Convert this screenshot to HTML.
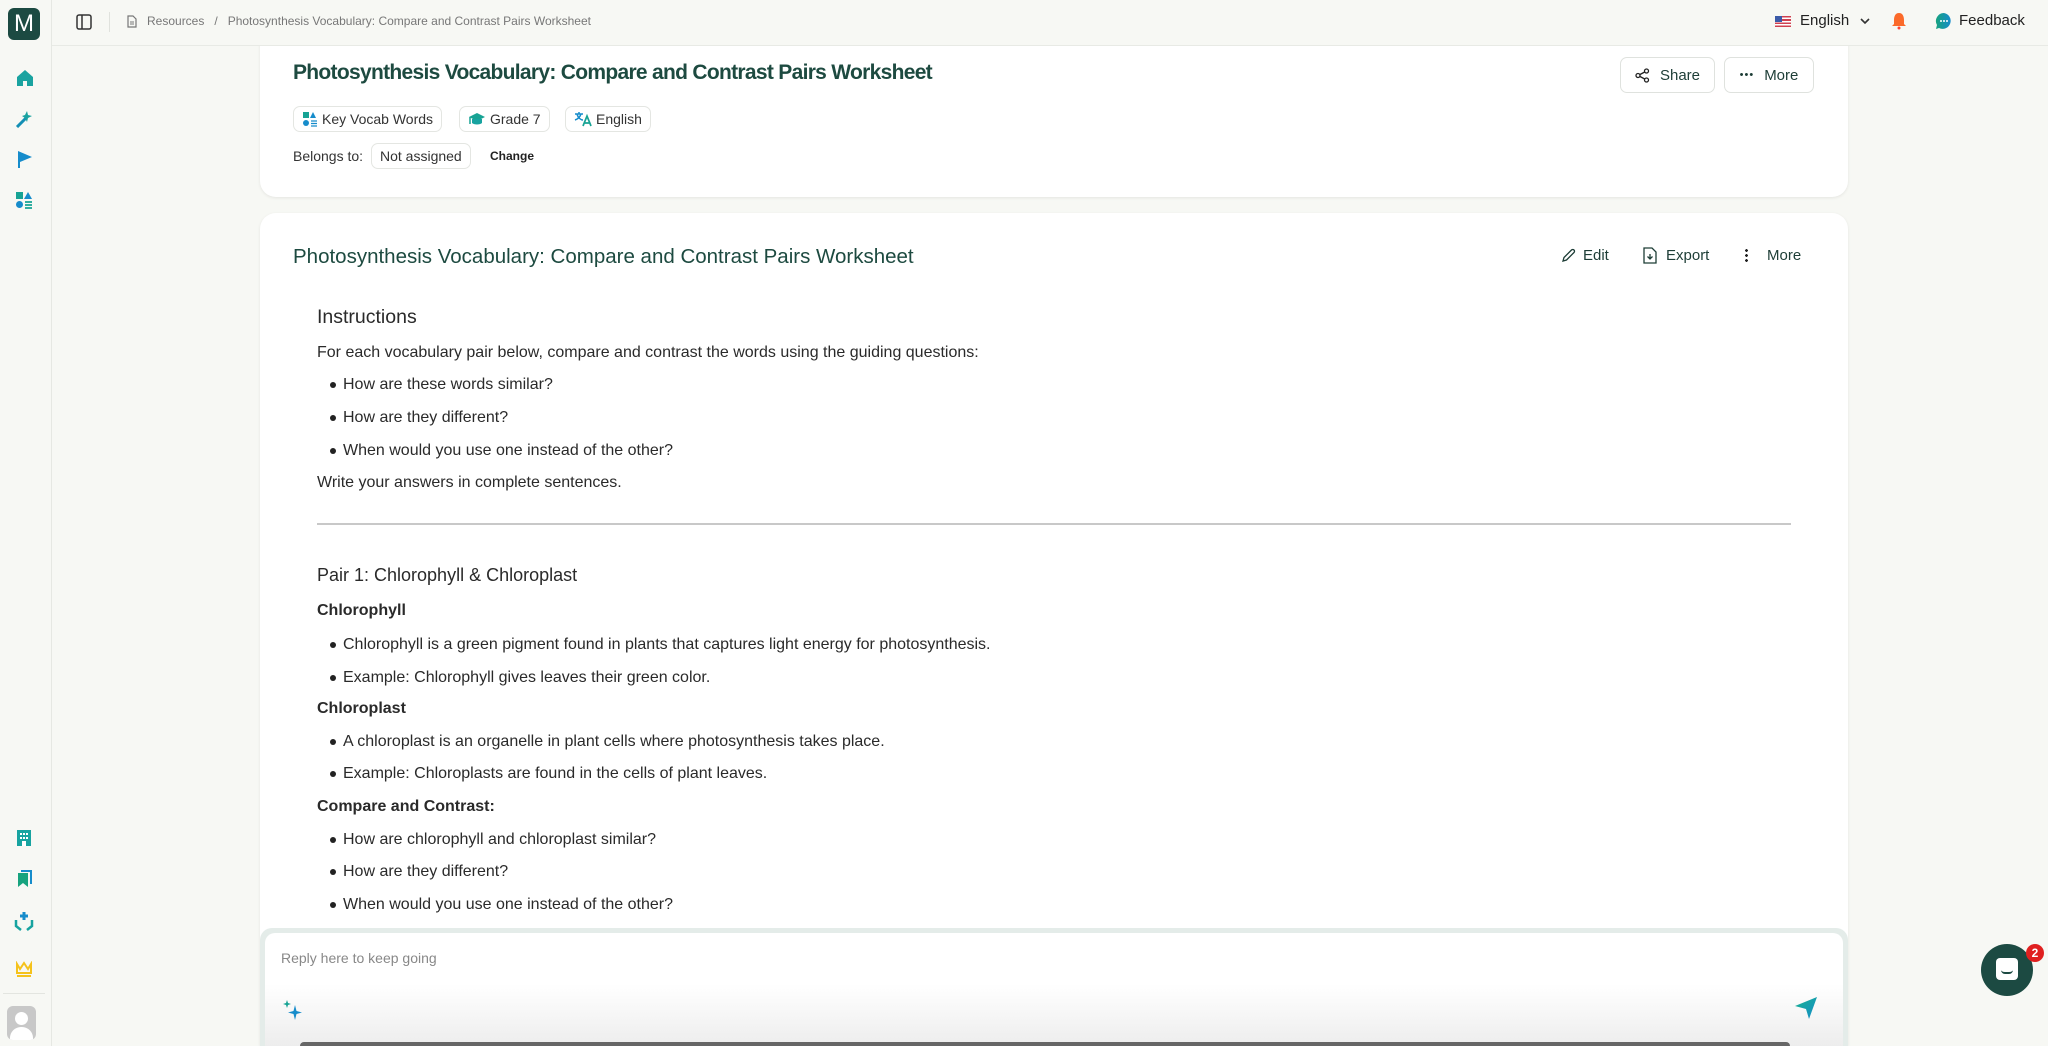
<!DOCTYPE html>
<html style="overflow:hidden;height:1046px"><head><meta charset="utf-8"><style>
*{box-sizing:border-box;margin:0;padding:0}
body{width:2048px;height:1046px;overflow:hidden;background:#f7f8f4;font-family:"Liberation Sans",sans-serif;color:#222;position:relative}
.abs{position:absolute}
.side{left:0;top:0;width:52px;height:1046px;border-right:1px solid #e6e8e3;background:#f7f8f4}
.top{left:52px;top:0;right:0;height:46px;border-bottom:1px solid #e8eae5;background:#f7f8f4;z-index:2}
.card{background:#fff;border-radius:16px;box-shadow:0 1px 3px rgba(0,0,0,.08)}
.chip{position:absolute;height:26px;border:1px solid #e4e6e2;border-radius:7px;font-size:14px;line-height:24px;padding:0 8px;color:#333;display:flex;align-items:center;gap:4px}
.btn{position:absolute;height:36px;border:1px solid #dfe2de;border-radius:7px;font-size:15px;color:#1d3d36;display:flex;align-items:center;justify-content:center;gap:10px;background:#fff}
.t{position:absolute;font-size:16px;color:#2a2a2a;white-space:nowrap}
.b{font-weight:bold}
.li::before{content:"";position:absolute;left:-13px;top:6px;width:6px;height:6px;border-radius:50%;background:#222}
</style></head><body>
<div class="abs side">
 <div class="abs" style="left:8px;top:8px;width:32px;height:32px;background:#1c4a42;border-radius:6px;color:#fff;font-size:24px;text-align:center;line-height:32px">M</div>
 <svg class="abs" style="left:16px;top:69px" width="18" height="18" viewBox="0 0 18 18"><path d="M9 1L17 8V17H11V12H7V17H1V8Z" fill="#1aa3a0"/></svg>
 <svg class="abs" style="left:15px;top:110px" width="18" height="18" viewBox="0 0 18 18"><path d="M2 17L11 8" stroke="#138fb4" stroke-width="3"/><path d="M12 1L13 5L17 6L13 8L12 12L10 8L7 6L10 5Z" fill="#1aa3a0"/></svg>
 <svg class="abs" style="left:16px;top:150px" width="18" height="18" viewBox="0 0 18 18"><path d="M2 1L16 7L4 12V18H2Z" fill="#168ccb"/></svg>
 <svg class="abs" style="left:15px;top:191px" width="18" height="18" viewBox="0 0 18 18"><rect x="1" y="1" width="7" height="7" fill="#17a394"/><path d="M13 1L17 8H9Z" fill="#168ccb"/><circle cx="4.5" cy="13.5" r="3.5" fill="#168ccb"/><path d="M10 11H17M10 14H17M10 17H17" stroke="#17a394" stroke-width="1.8"/></svg>
 <svg class="abs" style="left:15px;top:829px" width="18" height="18" viewBox="0 0 18 18"><rect x="2" y="1" width="14" height="16" fill="#17a3a0"/><g fill="#fff"><rect x="5" y="4" width="2" height="2"/><rect x="8" y="4" width="2" height="2"/><rect x="11" y="4" width="2" height="2"/><rect x="5" y="8" width="2" height="2"/><rect x="8" y="8" width="2" height="2"/><rect x="11" y="8" width="2" height="2"/><rect x="7" y="12" width="4" height="5"/></g></svg>
 <svg class="abs" style="left:15px;top:870px" width="18" height="18" viewBox="0 0 18 18"><path d="M3 3H13V17L8 13L3 17Z" fill="#17a37e"/><path d="M6 1H16V14" stroke="#168ccb" stroke-width="2" fill="none"/></svg>
 <svg class="abs" style="left:14px;top:911px" width="20" height="20" viewBox="0 0 20 20"><path d="M10 1V9M6 5H14" stroke="#168ccb" stroke-width="3"/><path d="M2 9V15L7 19M18 9V15L13 19" stroke="#17a3a0" stroke-width="2.5" fill="none"/></svg>
 <svg class="abs" style="left:15px;top:961px" width="18" height="16" viewBox="0 0 18 16"><path d="M2 3L5 8L9 2L13 8L16 3V12H2Z" fill="none" stroke="#f5c21b" stroke-width="2"/><path d="M2 15H16" stroke="#f5c21b" stroke-width="2"/></svg>
 <div class="abs" style="left:3px;top:993px;width:42px;height:1px;background:#e3e5e0"></div>
 <div class="abs" style="left:7px;top:1006px;width:29px;height:34px;background:#c8c8c8;border-radius:6px;overflow:hidden"><div class="abs" style="left:8px;top:6px;width:13px;height:13px;border-radius:50%;background:#fff"></div><div class="abs" style="left:3px;top:21px;width:23px;height:16px;border-radius:11px 11px 0 0;background:#fff"></div></div>
</div>
<div class="abs top">
 <svg class="abs" style="left:24px;top:14px" width="16" height="16" viewBox="0 0 16 16"><rect x="1" y="1" width="14" height="14" rx="2" fill="none" stroke="#333" stroke-width="1.5"/><path d="M6 1V15" stroke="#333" stroke-width="1.5"/></svg>
 <div class="abs" style="left:57px;top:12px;width:1px;height:20px;background:#e0e2dd"></div>
 <svg class="abs" style="left:75px;top:15px" width="10" height="13" viewBox="0 0 10 13"><path d="M1 1H6L9 4V12H1Z" fill="none" stroke="#777" stroke-width="1.2"/><path d="M3 7H7M3 9H7" stroke="#777"/></svg>
 <div class="abs" style="left:95px;top:14px;font-size:12px;color:#777">Resources&nbsp;&nbsp;&nbsp;/&nbsp;&nbsp;&nbsp;Photosynthesis Vocabulary: Compare and Contrast Pairs Worksheet</div>
 <div class="abs" style="left:1723px;top:16px;width:16px;height:11px;background:repeating-linear-gradient(#d04050 0 1.6px,#fff 1.6px 3.2px)"><div style="width:7px;height:6px;background:#3b5ba8"></div></div>
 <div class="abs" style="left:1748px;top:12px;font-size:15px;color:#222">English</div>
 <svg class="abs" style="left:1807px;top:16px" width="12" height="10" viewBox="0 0 12 10"><path d="M2 3L6 7L10 3" fill="none" stroke="#333" stroke-width="1.6"/></svg>
 <svg class="abs" style="left:1839px;top:12px" width="16" height="18" viewBox="0 0 16 18"><path d="M8 1C4 1 3 5 3 8V12L1 14H15L13 12V8C13 5 12 1 8 1Z" fill="#fb6a2a"/><circle cx="8" cy="16" r="1.5" fill="#f43"/></svg>
 <svg class="abs" style="left:1883px;top:12px" width="18" height="18" viewBox="0 0 18 18"><defs><linearGradient id="g1" x1="0" x2="1"><stop offset="0" stop-color="#17a37e"/><stop offset="1" stop-color="#168ccb"/></linearGradient></defs><path d="M9 1A8 8 0 1 1 4 16L1 17L2 13A8 8 0 0 1 9 1Z" fill="url(#g1)"/><g fill="#fff"><circle cx="6" cy="9" r="1"/><circle cx="9" cy="9" r="1"/><circle cx="12" cy="9" r="1"/></g></svg>
 <div class="abs" style="left:1907px;top:12px;font-size:15px;color:#222">Feedback</div>
</div>

<div class="abs card" style="left:260px;top:30px;width:1588px;height:167px;border-radius:0 0 16px 16px"></div>
<div class="abs" style="left:293px;top:61px;font-size:21px;font-weight:bold;color:#1d4a40;letter-spacing:-0.7px">Photosynthesis Vocabulary: Compare and Contrast Pairs Worksheet</div>
<div class="chip" style="left:293px;top:106px"><svg width="16" height="16" viewBox="0 0 16 16"><rect x="1" y="1" width="6" height="6" fill="#17a394"/><path d="M11 1L14 7H8Z" fill="#168ccb"/><circle cx="4" cy="12" r="3" fill="#168ccb"/><path d="M9 10H15M9 12.5H15M9 15H15" stroke="#168ccb" stroke-width="1.3"/></svg>Key Vocab Words</div>
<div class="chip" style="left:459px;top:106px"><svg width="18" height="16" viewBox="0 0 18 16"><path d="M9 2L17 6L9 10L1 6Z" fill="#17a394"/><path d="M4 8V12C6 14 12 14 14 12V8" fill="#17a3a0"/><path d="M2 6V13" stroke="#17a394" stroke-width="1.5"/></svg>Grade 7</div>
<div class="chip" style="left:565px;top:106px"><svg width="18" height="16" viewBox="0 0 18 16"><path d="M1 3H9M5 1V3M3 3C4 7 7 9 9 9M7 3C6 6 4 8 1 9" fill="none" stroke="#168ccb" stroke-width="1.5"/><path d="M9 15L13 5L17 15M10.5 12H15.5" fill="none" stroke="#17a394" stroke-width="1.7"/></svg>English</div>
<div class="abs" style="left:293px;top:148px;font-size:14px;color:#333">Belongs to:</div>
<div class="chip" style="left:371px;top:143px;height:26px">Not assigned</div>
<div class="abs" style="left:490px;top:149px;font-size:12px;color:#222;font-weight:bold">Change</div>
<div class="btn" style="left:1620px;top:57px;width:95px"><svg width="15" height="15" viewBox="0 0 15 15"><circle cx="11.5" cy="3" r="2" fill="none" stroke="#222" stroke-width="1.3"/><circle cx="3" cy="7.5" r="2" fill="none" stroke="#222" stroke-width="1.3"/><circle cx="11.5" cy="12" r="2" fill="none" stroke="#222" stroke-width="1.3"/><path d="M5 6.5L9.7 4M5 8.5L9.7 11" stroke="#222" stroke-width="1.3"/></svg>Share</div>
<div class="btn" style="left:1724px;top:57px;width:90px"><span style="font-size:11px;letter-spacing:1px">•••</span>More</div>

<div class="abs card" style="left:260px;top:213px;width:1588px;height:833px;border-radius:16px 16px 0 0"></div>
<div class="abs" style="left:293px;top:245px;font-size:20.5px;color:#1d4a40">Photosynthesis Vocabulary: Compare and Contrast Pairs Worksheet</div>
<svg class="abs" style="left:1561px;top:248px" width="15" height="15" viewBox="0 0 15 15"><path d="M2 13L3 9.5L10.5 2A1.5 1.5 0 0 1 13 4.5L5.5 12Z" fill="none" stroke="#1d3d36" stroke-width="1.3"/></svg>
<div class="abs" style="left:1583px;top:247px;font-size:15px;color:#1d3d36">Edit</div>
<svg class="abs" style="left:1643px;top:247px" width="14" height="17" viewBox="0 0 14 17"><path d="M1 1H9L13 5V16H1Z" fill="none" stroke="#1d3d36" stroke-width="1.3"/><path d="M7 7V12M4.5 9.5L7 12L9.5 9.5" fill="none" stroke="#1d3d36" stroke-width="1.3"/></svg>
<div class="abs" style="left:1666px;top:247px;font-size:15px;color:#1d3d36">Export</div>
<div class="abs" style="left:1745px;top:248px;width:3px;height:15px;background:radial-gradient(circle,#222 1.3px,transparent 1.5px) 0 0/3px 5px"></div>
<div class="abs" style="left:1767px;top:247px;font-size:15px;color:#1d3d36">More</div>

<div class="t" style="left:317px;top:306px;font-size:19.5px">Instructions</div>
<div class="t" style="left:317px;top:344px">For each vocabulary pair below, compare and contrast the words using the guiding questions:</div>
<div class="t li" style="left:343px;top:376px">How are these words similar?</div>
<div class="t li" style="left:343px;top:409px">How are they different?</div>
<div class="t li" style="left:343px;top:442px">When would you use one instead of the other?</div>
<div class="t" style="left:317px;top:474px">Write your answers in complete sentences.</div>
<div class="abs" style="left:317px;top:523px;width:1474px;height:2px;background:#c8c8c8"></div>
<div class="t" style="left:317px;top:565px;font-size:18px">Pair 1: Chlorophyll &amp; Chloroplast</div>
<div class="t b" style="left:317px;top:602px">Chlorophyll</div>
<div class="t li" style="left:343px;top:636px">Chlorophyll is a green pigment found in plants that captures light energy for photosynthesis.</div>
<div class="t li" style="left:343px;top:669px">Example: Chlorophyll gives leaves their green color.</div>
<div class="t b" style="left:317px;top:700px">Chloroplast</div>
<div class="t li" style="left:343px;top:733px">A chloroplast is an organelle in plant cells where photosynthesis takes place.</div>
<div class="t li" style="left:343px;top:765px">Example: Chloroplasts are found in the cells of plant leaves.</div>
<div class="t b" style="left:317px;top:798px">Compare and Contrast:</div>
<div class="t li" style="left:343px;top:831px">How are chlorophyll and chloroplast similar?</div>
<div class="t li" style="left:343px;top:863px">How are they different?</div>
<div class="t li" style="left:343px;top:896px">When would you use one instead of the other?</div>

<div class="abs" style="left:260px;top:928px;width:1588px;height:118px;border-radius:12px 12px 0 0;background:#e4ece9"></div>
<div class="abs" style="left:265px;top:933px;width:1578px;height:113px;border-radius:10px 10px 0 0;background:linear-gradient(#fff 45%,#ededed)"></div>
<div class="abs" style="left:300px;top:1042px;width:1490px;height:4px;border-radius:4px 4px 0 0;background:#666"></div>
<div class="abs" style="left:281px;top:950px;font-size:14px;color:#888">Reply here to keep going</div>
<svg class="abs" style="left:283px;top:1000px" width="20" height="20" viewBox="0 0 20 20"><path d="M12 5L13.5 11L19 12.5L13.5 14L12 20L10.5 14L5 12.5L10.5 11Z" fill="#168ccb"/><path d="M4 0L5 3L8 4L5 5L4 8L3 5L0 4L3 3Z" fill="#17a394"/></svg>
<svg class="abs" style="left:1794px;top:996px" width="24" height="24" viewBox="0 0 24 24"><defs><linearGradient id="g2" x1="0" y1="0" x2="1" y2="1"><stop offset="0" stop-color="#17b38e"/><stop offset="1" stop-color="#168ccb"/></linearGradient></defs><path d="M1 10L23 1L15 23L12 13Z" fill="url(#g2)"/></svg>
<div class="abs" style="left:1981px;top:944px;width:52px;height:52px;border-radius:50%;background:#1c4a42"></div>
<div class="abs" style="left:1996px;top:958px;width:22px;height:22px;border-radius:4px;background:#fff"><div style="position:absolute;left:5px;top:12px;width:12px;height:4px;border-bottom:2px solid #1c4a42;border-radius:0 0 6px 6px"></div></div>
<div class="abs" style="left:2026px;top:944px;width:18px;height:18px;border-radius:50%;background:#e02020;color:#fff;font-size:12px;font-weight:bold;text-align:center;line-height:18px">2</div>
</body></html>
